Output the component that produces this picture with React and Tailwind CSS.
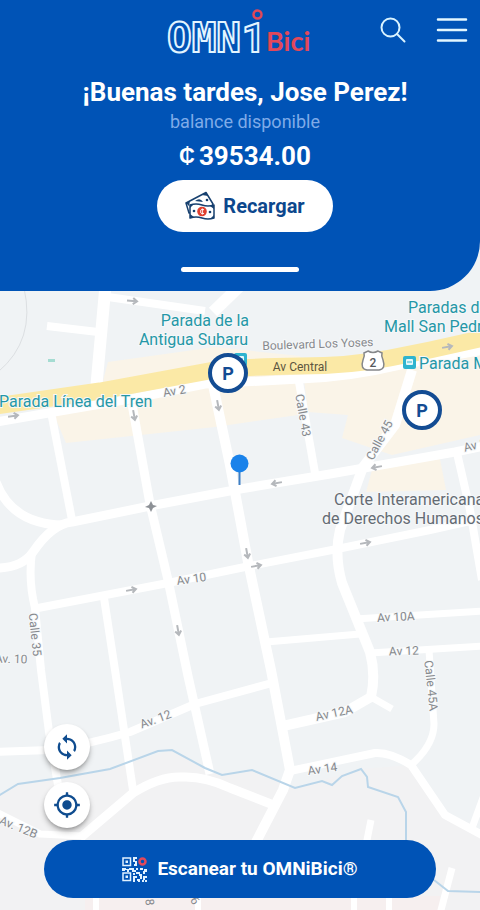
import { MdMyLocation, MdSync } from "react-icons/md";

const ROADS = [
	{ w: 12, d: "M106 280L96 390" },
	{ w: 8, d: "M108 297L205 311" },
	{ w: 12, d: "M242 284L213 312" },
	{ w: 8, d: "M47 326L98 332" },
	{ w: 8, d: "M51 412L72 520" },
	{ w: 9, d: "M132 404L150 504L168 580L188 676L210 774" },
	{ w: 10, d: "M213 385L230 465L248 562L271 670L290 770L283 790L256 842" },
	{ w: 9, d: "M-4 568Q22 568 33 552Q52 524 72 522L150 506L240 489L330 474L455 452L484 446" },
	{ w: 9, d: "M-4 482Q12 524 62 525" },
	{ w: 8, d: "M32 552Q28 580 35 608L41 670L49 732L58 785" },
	{ w: 8, d: "M38 608L168 583L240 568L337 549L430 530L484 518" },
	{ w: 8, d: "M104 598L115 670L133 790" },
	{ w: 8, d: "M-4 752L50 750Q90 744 130 732L195 704L272 683" },
	{ w: 9, d: "M80 838L133 793Q160 776 182 777Q205 776 230 788L276 806" },
	{ w: 8, d: "M299 382L315 473" },
	{ w: 10, d: "M412 370L395 425L363 467L340 530Q334 555 342 583L370 652Q376 675 371 697L345 712L283 726" },
	{ w: 7, d: "M371 697L392 709" },
	{ w: 7, d: "M355 619L484 611" },
	{ w: 7, d: "M266 642L360 634" },
	{ w: 7, d: "M370 653L484 646" },
	{ w: 8, d: "M457 453L470 510L482 580" },
	{ w: 7, d: "M429 650L434 724Q434 745 411 765" },
	{ w: 8, d: "M290 771L375 753Q390 752 411 765L445 815L484 836" },
	{ w: 7, d: "M484 795L472 828" },
	{ w: 7, d: "M371 820L366 845" },
	{ w: 7, d: "M452 868L440 914" },
	{ w: 7, d: "M-4 812L40 834L82 836" },
	{ w: 6, d: "M96 896V914M198 896V914M354 896V914M389 896V914" },
];

// x, y, rotation
const ARROWS = [
	[132, 301, 5],
	[13, 416, -8],
	[134, 415, 80],
	[218, 405, 80],
	[277, 483, 170],
	[377, 467, 170],
	[131, 590, -10],
	[178, 630, 80],
	[247, 553, 80],
	[256, 566, -10],
	[365, 543, -10],
	[447, 347, -10],
];

const STREETS = [
	{ text: "Boulevard Los Yoses", x: 318, y: 348, r: -2 },
	{ text: "Av 2", x: 175, y: 395, r: -10 },
	{ text: "Calle 43", x: 299, y: 416, r: 80 },
	{ text: "Calle 45", x: 383, y: 442, r: -62 },
	{ text: "Av 8", x: 476, y: 449, r: -14 },
	{ text: "Av 10", x: 192, y: 583, r: -8 },
	{ text: "Calle 35", x: 31, y: 635, r: 84 },
	{ text: "Av. 10", x: 11, y: 663, r: 2 },
	{ text: "Av 10A", x: 396, y: 621, r: -3 },
	{ text: "Av 12", x: 404, y: 655, r: -2 },
	{ text: "Calle 45A", x: 427, y: 686, r: 84 },
	{ text: "Av 12A", x: 335, y: 717, r: -12 },
	{ text: "Av. 12", x: 157, y: 723, r: -20 },
	{ text: "Av 14", x: 323, y: 773, r: -8 },
	{ text: "Av. 12B", x: 17, y: 831, r: 22 },
];

const PLACES = [
	{ text: "Parada de la", x: 249, y: 326, anchor: "end" },
	{ text: "Antigua Subaru", x: 248, y: 345, anchor: "end" },
	{ text: "Parada Línea del Tren", x: -1, y: 407, anchor: "start" },
	{ text: "Paradas del", x: 408, y: 313, anchor: "start" },
	{ text: "Mall San Pedro", x: 384, y: 332, anchor: "start" },
	{ text: "Parada Mall", x: 419, y: 369, anchor: "start" },
];

function BusStop({ x, y }) {
	return (
		<g transform={`translate(${x} ${y})`}>
			<rect width="13" height="13" rx="2" fill="#2fb4cf" />
			<rect x="3" y="3" width="7" height="6" rx="1" fill="#e6f8fb" />
			<path d="M4 6h5M4 10.5h1M8 10.5h1" stroke="#2fb4cf" strokeWidth="1" />
		</g>
	);
}

function CityMap() {
	return (
		<svg
			viewBox="0 240 480 670"
			preserveAspectRatio="xMinYMin slice"
			className="absolute inset-0 h-full w-full"
			role="img"
			aria-label="Mapa"
		>
			<rect y="240" width="480" height="670" fill="#f0f3f5" />

			{/* Land south of the river */}
			<path
				d="M0 795L18 784L110 769L172 750L222 775L252 770L295 788L361 769L411 765L445 815L480 836V910H0Z"
				fill="#f2f2f3"
			/>
			<path d="M85 896H440V910H85Z" fill="#f6efef" />

			{/* Commercial zones */}
			<g fill="#faf4e8">
				<path d="M108 362L215 347L300 356V375L100 392Z" />
				<path d="M54 415L230 378L300 378L298 415L215 427L66 443Z" />
				<path d="M304 380L480 352V435L392 455L342 438L348 415L308 412Z" />
				<path d="M372 470L440 459L446 490L366 492Z" />
			</g>

			<path d="M24 288Q36 340 -2 372" fill="none" stroke="#dcdfe2" />
			<rect x="48" y="359" width="7" height="3" fill="#a5dcd2" />

			<g fill="none" stroke="#ffffff" strokeLinejoin="round">
				{ROADS.map((road) => (
					<path key={road.d} d={road.d} strokeWidth={road.w} />
				))}
				<path
					d="M-4 422L60 411L130 399L205 384L300 379Q350 377 400 365L484 350"
					strokeWidth="9"
				/>
			</g>

			{/* Main avenue */}
			<path
				d="M-4 406L100 391L215 370Q240 367 300 366Q350 366 390 358L430 350L484 338"
				fill="none"
				stroke="#fbe9a6"
				strokeWidth="17"
			/>

			{/* River */}
			<g fill="none" stroke="#b9d5e9" strokeWidth="2">
				<path d="M-2 796L18 784L60 778L110 769L158 751L172 750L205 768L222 775L252 770L295 788L322 781L332 785L342 776L361 769L367 777L368 787L398 797L406 812V845" />
				<path d="M434 880L448 891L484 892" />
			</g>

			<g fill="none" stroke="#b5b8bc" strokeWidth="2">
				{ARROWS.map(([x, y, r]) => (
					<path
						key={`${x}-${y}`}
						transform={`translate(${x} ${y}) rotate(${r})`}
						d="M-5 0H4M1 -3L5 0L1 3"
					/>
				))}
			</g>
			<path d="M151 501L153 505L157 506L153 508L151 512L149 508L145 507L149 505Z" fill="#8d9196" />

			<g className="font-['Roboto',sans-serif] text-[12px]" fill="#86898d" textAnchor="middle">
				{STREETS.map(({ text, x, y, r }) => (
					<text
						key={text}
						transform={`translate(${x} ${y}) rotate(${r})`}
						stroke="#f6f8f9"
						strokeWidth="2"
						paintOrder="stroke"
					>
						{text}
					</text>
				))}
				<text x="300" y="371" fill="#5c553f">
					Av Central
				</text>
				<text transform="translate(200 860) rotate(-70)">Calle 4</text>
				<text transform="translate(144 888) rotate(84)">Calle 8</text>
				<text transform="translate(184 890) rotate(60)">Calle 6</text>
			</g>

			{/* Highway shield */}
			<path
				d="M364 353L368 351Q373 354 378 351L382 353Q381 356 383 360Q386 369 379 370H367Q360 369 363 360Q365 356 364 353Z"
				fill="#ffffff"
				stroke="#85878a"
				strokeWidth="1.5"
			/>
			<text x="373" y="367" textAnchor="middle" fill="#55585c" className="font-['Roboto',sans-serif] text-[12px] font-medium">
				2
			</text>

			<BusStop x={234} y={353} />
			<BusStop x={403} y={356} />

			<g className="font-['Roboto',sans-serif] text-[16px]" stroke="#f6f8f9" strokeWidth="2" paintOrder="stroke">
				{PLACES.map(({ text, x, y, anchor }) => (
					<text key={text} x={x} y={y} textAnchor={anchor} fill="#2597a7">
						{text}
					</text>
				))}
				<text x="334" y="505" fill="#646b74">
					Corte Interamericana
				</text>
				<text x="322" y="524" fill="#646b74">
					de Derechos Humanos
				</text>
			</g>

			{/* Current position */}
			<path d="M239.5 468V485" stroke="#3f7fc4" strokeWidth="2" />
			<circle cx="239.5" cy="463.5" r="9" fill="#1a82ea" />
		</svg>
	);
}

function Logo() {
	return (
		<svg width="148" height="48" viewBox="166 6 148 48" className="overflow-visible" role="img" aria-label="OMNi Bici">
			<g fill="#0053b6" stroke="#e3f5ff" strokeWidth="2">
				<text x="167" y="52" className="font-['DejaVu_Sans_Mono',monospace] text-[41px] font-bold">
					OMN
				</text>
				<text x="242" y="52" className="font-['Roboto',sans-serif] text-[41px] font-bold">
					1
				</text>
			</g>
			<circle cx="257.5" cy="14.5" r="4" fill="none" stroke="#e0485a" strokeWidth="2.5" />
			<text x="266" y="51" fill="#e2485a" className="font-['Lato',sans-serif] text-[27px] font-bold">
				Bici
			</text>
		</svg>
	);
}

function MoneyIcon() {
	return (
		<svg width="30" height="30" viewBox="0 0 30 30" fill="none" aria-hidden="true">
			<path d="M1 12L21 1.5L28 13L25 19L4 22Z" fill="#ffffff" stroke="#17406f" strokeWidth="1.5" strokeLinejoin="round" />
			<path d="M1 12L5 10L4 15ZM21 1.5L17 4L23 5Z" fill="#17406f" />
			<path d="M10 10Q15 6 18 11Z" fill="#17406f" />
			<circle cx="22" cy="9" r="1.3" fill="#17406f" />
			<path d="M5 14Q11 12 17 14T29 14V27Q23 29 17 27T5 27Z" fill="#ffffff" stroke="#17406f" strokeWidth="1.5" strokeLinejoin="round" />
			<path d="M5 14L9 13L5 17ZM29 14L25 15L29 18ZM5 27L5 23L9 26ZM29 27L29 24L25 28Z" fill="#17406f" />
			<circle cx="9" cy="20" r="1.3" fill="#17406f" />
			<circle cx="25" cy="21" r="1.3" fill="#17406f" />
			<circle cx="17" cy="20.5" r="4.8" fill="#e0402f" />
			<path d="M19 18.8Q15.5 17.5 15.5 20.5T19 22.3M17.3 17.5V23.5" stroke="#ffffff" strokeWidth="1" />
		</svg>
	);
}

function QrIcon() {
	return (
		<svg width="25" height="25" viewBox="0 0 25 25" fill="none" aria-hidden="true">
			<g stroke="#dff1ff" strokeWidth="1.5">
				<rect x="1" y="1" width="7.5" height="7.5" />
				<rect x="1" y="16" width="7.5" height="7.5" />
			</g>
			<g fill="#dff1ff">
				<rect x="3.5" y="3.5" width="2.5" height="2.5" />
				<rect x="3.5" y="18.5" width="2.5" height="2.5" />
				<path d="M11 0h4v2h-2v2h2v5h-3v-2h1v-2h-2z" />
				<path d="M0 11h4v1h3v-1h5v2h2v-2h2v2h-2v2h-4v-2h-3v2h-2v-2h-2v1h-3z" />
				<path d="M18 11h3v2h-3zM22 12h3v3h-2v2h-2v-3h1z" />
				<path d="M11 16h2v2h-2zM14 15h4v2h2v2h-3v-2h-3zM11 19h4v2h-2v4h-2zM15 22h3v3h-2v-1h-1zM18 19h2v3h-2zM21 19h4v2h-2v2h-2zM20 23h2v2h-2zM23 23h2v2h-2z" />
			</g>
			<circle cx="20.5" cy="4.5" r="3" stroke="#e0485a" strokeWidth="2.5" />
		</svg>
	);
}

function Header() {
	return (
		<header className="relative z-10 rounded-br-[50px] bg-[#0053b6] pb-[19px] text-white">
			{/* Top bar */}
			<div className="grid h-[60px] grid-cols-[1fr_auto_1fr] items-center px-3">
				<span />
				<Logo />
				<div className="flex items-center justify-end gap-[30px]">
					<button type="button" aria-label="Buscar" className="cursor-pointer">
						<svg width="26" height="26" viewBox="0 0 26 26" fill="none" stroke="#d9f3ff" strokeWidth="2" strokeLinecap="round">
							<circle cx="10.5" cy="10.5" r="9" />
							<path d="M17 17L24.5 24.5" />
						</svg>
					</button>
					<button type="button" aria-label="Menú" className="cursor-pointer">
						<svg width="32" height="26" viewBox="0 0 32 26" fill="none" stroke="#e3f7ff" strokeWidth="2.5" strokeLinecap="round">
							<path d="M2 2.5H30M2 13H30M2 23.5H30" />
						</svg>
					</button>
				</div>
			</div>

			{/* Balance */}
			<div className="flex flex-col items-center pt-4 pl-[10px]">
				<h1 className="text-[26px] leading-8 font-bold">¡Buenas tardes, Jose Perez!</h1>
				<p className="text-[18px] leading-7 text-[#7fabe8]">balance disponible</p>
				<p className="mt-1 flex items-center gap-1 text-[26px] leading-8 font-bold">
					<span className="text-[22px]">₵</span>
					<span>39534.00</span>
				</p>
				<button
					type="button"
					className="mt-2 flex h-[52px] cursor-pointer items-center gap-2 rounded-full bg-white px-7 text-[20px] font-bold text-[#0c478d]"
				>
					<MoneyIcon />
					Recargar
				</button>
			</div>
			<div className="mx-auto mt-[35px] h-[5px] w-[118px] rounded-full bg-white" />
		</header>
	);
}

const PIN =
	"absolute flex size-10 cursor-pointer items-center justify-center rounded-full border-4 border-[#134c93] bg-white text-[18px] font-bold text-[#134c93]";
const ROUND =
	"flex size-[46px] cursor-pointer items-center justify-center rounded-full bg-white text-[#0f4c8f] shadow-md shadow-black/30";

export default function App() {
	return (
		<div className="flex min-h-screen flex-col bg-[#f0f3f5] font-['Roboto',sans-serif]">
			<Header />

			<main className="relative -mt-[51px] flex flex-1 flex-col justify-end overflow-hidden px-11 pt-60 pb-3">
				<CityMap />
				<button type="button" className={`${PIN} top-[113px] left-[208px]`}>
					P
				</button>
				<button type="button" className={`${PIN} top-[150px] left-[402px]`}>
					P
				</button>

				{/* Map controls */}
				<div className="relative flex flex-col gap-3">
					<button type="button" aria-label="Actualizar" className={ROUND}>
						<MdSync size={28} />
					</button>
					<button type="button" aria-label="Mi ubicación" className={ROUND}>
						<MdMyLocation size={28} />
					</button>
					<button
						type="button"
						className="flex h-[58px] cursor-pointer items-center justify-center gap-[10px] rounded-full bg-[#0053b6] text-[19px] font-bold text-white"
					>
						<QrIcon />
						Escanear tu OMNiBici®
					</button>
				</div>
			</main>
		</div>
	);
}
